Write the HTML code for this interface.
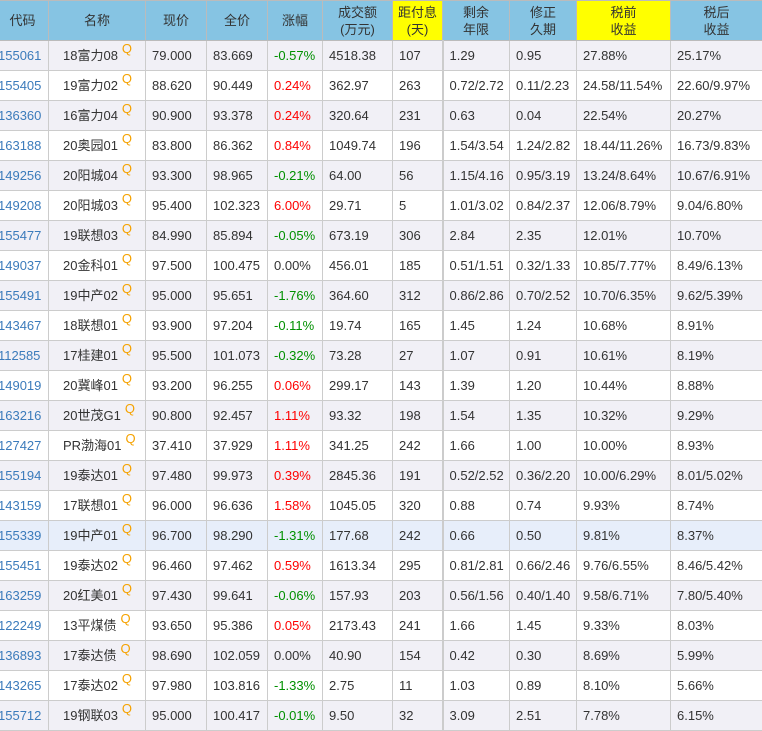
<!DOCTYPE html><html><head><meta charset="utf-8"><style>
body{margin:0;width:762px;height:722px;overflow:hidden;background:#fff;font-family:"Liberation Sans","Noto Sans CJK SC",sans-serif;}
table{position:absolute;left:-4px;top:0;width:766px;border-collapse:collapse;table-layout:fixed;font-size:13px;color:#333;}
td,th{border:1px solid #ccc;height:29px;padding:0 0 0 6px;white-space:nowrap;overflow:hidden;text-align:left;font-weight:normal;line-height:16px}
th{background:#86c4e3;height:39px;text-align:center;padding:0;line-height:17px;color:#333;border-color:#bbb}
th.y{background:#ffff00}
td.c{color:#3b7bbb;padding-left:1px}
td.n{padding-left:14px}
tr.g td{background:#f1f0f6}
tr.h td{background:#e7eefa}
.q{color:#f5a200;font-size:13px;line-height:0;position:relative;top:-7px;margin-left:4px}
.r{color:#f00}.gr{color:#009000}
td.b{border-right:2px solid #ccc}
</style></head><body>
<table>
<colgroup><col style="width:52px"><col style="width:97px"><col style="width:61px"><col style="width:61px"><col style="width:55px"><col style="width:70px"><col style="width:50px"><col style="width:67px"><col style="width:67px"><col style="width:94px"><col style="width:92px"></colgroup>
<tr><th>代码</th><th>名称</th><th>现价</th><th>全价</th><th>涨幅</th><th>成交额<br>(万元)</th><th class="y">距付息<br>(天)</th><th>剩余<br>年限</th><th>修正<br>久期</th><th class="y">税前<br>收益</th><th>税后<br>收益</th></tr>
<tr class="g"><td class="c">155061</td><td class="n">18富力08<span class="q">Q</span></td><td>79.000</td><td>83.669</td><td class="gr">-0.57%</td><td>4518.38</td><td class="b">107</td><td>1.29</td><td>0.95</td><td>27.88%</td><td>25.17%</td></tr>
<tr><td class="c">155405</td><td class="n">19富力02<span class="q">Q</span></td><td>88.620</td><td>90.449</td><td class="r">0.24%</td><td>362.97</td><td class="b">263</td><td>0.72/2.72</td><td>0.11/2.23</td><td>24.58/11.54%</td><td>22.60/9.97%</td></tr>
<tr class="g"><td class="c">136360</td><td class="n">16富力04<span class="q">Q</span></td><td>90.900</td><td>93.378</td><td class="r">0.24%</td><td>320.64</td><td class="b">231</td><td>0.63</td><td>0.04</td><td>22.54%</td><td>20.27%</td></tr>
<tr><td class="c">163188</td><td class="n">20奥园01<span class="q">Q</span></td><td>83.800</td><td>86.362</td><td class="r">0.84%</td><td>1049.74</td><td class="b">196</td><td>1.54/3.54</td><td>1.24/2.82</td><td>18.44/11.26%</td><td>16.73/9.83%</td></tr>
<tr class="g"><td class="c">149256</td><td class="n">20阳城04<span class="q">Q</span></td><td>93.300</td><td>98.965</td><td class="gr">-0.21%</td><td>64.00</td><td class="b">56</td><td>1.15/4.16</td><td>0.95/3.19</td><td>13.24/8.64%</td><td>10.67/6.91%</td></tr>
<tr><td class="c">149208</td><td class="n">20阳城03<span class="q">Q</span></td><td>95.400</td><td>102.323</td><td class="r">6.00%</td><td>29.71</td><td class="b">5</td><td>1.01/3.02</td><td>0.84/2.37</td><td>12.06/8.79%</td><td>9.04/6.80%</td></tr>
<tr class="g"><td class="c">155477</td><td class="n">19联想03<span class="q">Q</span></td><td>84.990</td><td>85.894</td><td class="gr">-0.05%</td><td>673.19</td><td class="b">306</td><td>2.84</td><td>2.35</td><td>12.01%</td><td>10.70%</td></tr>
<tr><td class="c">149037</td><td class="n">20金科01<span class="q">Q</span></td><td>97.500</td><td>100.475</td><td>0.00%</td><td>456.01</td><td class="b">185</td><td>0.51/1.51</td><td>0.32/1.33</td><td>10.85/7.77%</td><td>8.49/6.13%</td></tr>
<tr class="g"><td class="c">155491</td><td class="n">19中产02<span class="q">Q</span></td><td>95.000</td><td>95.651</td><td class="gr">-1.76%</td><td>364.60</td><td class="b">312</td><td>0.86/2.86</td><td>0.70/2.52</td><td>10.70/6.35%</td><td>9.62/5.39%</td></tr>
<tr><td class="c">143467</td><td class="n">18联想01<span class="q">Q</span></td><td>93.900</td><td>97.204</td><td class="gr">-0.11%</td><td>19.74</td><td class="b">165</td><td>1.45</td><td>1.24</td><td>10.68%</td><td>8.91%</td></tr>
<tr class="g"><td class="c">112585</td><td class="n">17桂建01<span class="q">Q</span></td><td>95.500</td><td>101.073</td><td class="gr">-0.32%</td><td>73.28</td><td class="b">27</td><td>1.07</td><td>0.91</td><td>10.61%</td><td>8.19%</td></tr>
<tr><td class="c">149019</td><td class="n">20冀峰01<span class="q">Q</span></td><td>93.200</td><td>96.255</td><td class="r">0.06%</td><td>299.17</td><td class="b">143</td><td>1.39</td><td>1.20</td><td>10.44%</td><td>8.88%</td></tr>
<tr class="g"><td class="c">163216</td><td class="n">20世茂G1<span class="q">Q</span></td><td>90.800</td><td>92.457</td><td class="r">1.11%</td><td>93.32</td><td class="b">198</td><td>1.54</td><td>1.35</td><td>10.32%</td><td>9.29%</td></tr>
<tr><td class="c">127427</td><td class="n">PR渤海01<span class="q">Q</span></td><td>37.410</td><td>37.929</td><td class="r">1.11%</td><td>341.25</td><td class="b">242</td><td>1.66</td><td>1.00</td><td>10.00%</td><td>8.93%</td></tr>
<tr class="g"><td class="c">155194</td><td class="n">19泰达01<span class="q">Q</span></td><td>97.480</td><td>99.973</td><td class="r">0.39%</td><td>2845.36</td><td class="b">191</td><td>0.52/2.52</td><td>0.36/2.20</td><td>10.00/6.29%</td><td>8.01/5.02%</td></tr>
<tr><td class="c">143159</td><td class="n">17联想01<span class="q">Q</span></td><td>96.000</td><td>96.636</td><td class="r">1.58%</td><td>1045.05</td><td class="b">320</td><td>0.88</td><td>0.74</td><td>9.93%</td><td>8.74%</td></tr>
<tr class="h"><td class="c">155339</td><td class="n">19中产01<span class="q">Q</span></td><td>96.700</td><td>98.290</td><td class="gr">-1.31%</td><td>177.68</td><td class="b">242</td><td>0.66</td><td>0.50</td><td>9.81%</td><td>8.37%</td></tr>
<tr><td class="c">155451</td><td class="n">19泰达02<span class="q">Q</span></td><td>96.460</td><td>97.462</td><td class="r">0.59%</td><td>1613.34</td><td class="b">295</td><td>0.81/2.81</td><td>0.66/2.46</td><td>9.76/6.55%</td><td>8.46/5.42%</td></tr>
<tr class="g"><td class="c">163259</td><td class="n">20红美01<span class="q">Q</span></td><td>97.430</td><td>99.641</td><td class="gr">-0.06%</td><td>157.93</td><td class="b">203</td><td>0.56/1.56</td><td>0.40/1.40</td><td>9.58/6.71%</td><td>7.80/5.40%</td></tr>
<tr><td class="c">122249</td><td class="n">13平煤债<span class="q">Q</span></td><td>93.650</td><td>95.386</td><td class="r">0.05%</td><td>2173.43</td><td class="b">241</td><td>1.66</td><td>1.45</td><td>9.33%</td><td>8.03%</td></tr>
<tr class="g"><td class="c">136893</td><td class="n">17泰达债<span class="q">Q</span></td><td>98.690</td><td>102.059</td><td>0.00%</td><td>40.90</td><td class="b">154</td><td>0.42</td><td>0.30</td><td>8.69%</td><td>5.99%</td></tr>
<tr><td class="c">143265</td><td class="n">17泰达02<span class="q">Q</span></td><td>97.980</td><td>103.816</td><td class="gr">-1.33%</td><td>2.75</td><td class="b">11</td><td>1.03</td><td>0.89</td><td>8.10%</td><td>5.66%</td></tr>
<tr class="g"><td class="c">155712</td><td class="n">19钢联03<span class="q">Q</span></td><td>95.000</td><td>100.417</td><td class="gr">-0.01%</td><td>9.50</td><td class="b">32</td><td>3.09</td><td>2.51</td><td>7.78%</td><td>6.15%</td></tr>
</table>
</body></html>
